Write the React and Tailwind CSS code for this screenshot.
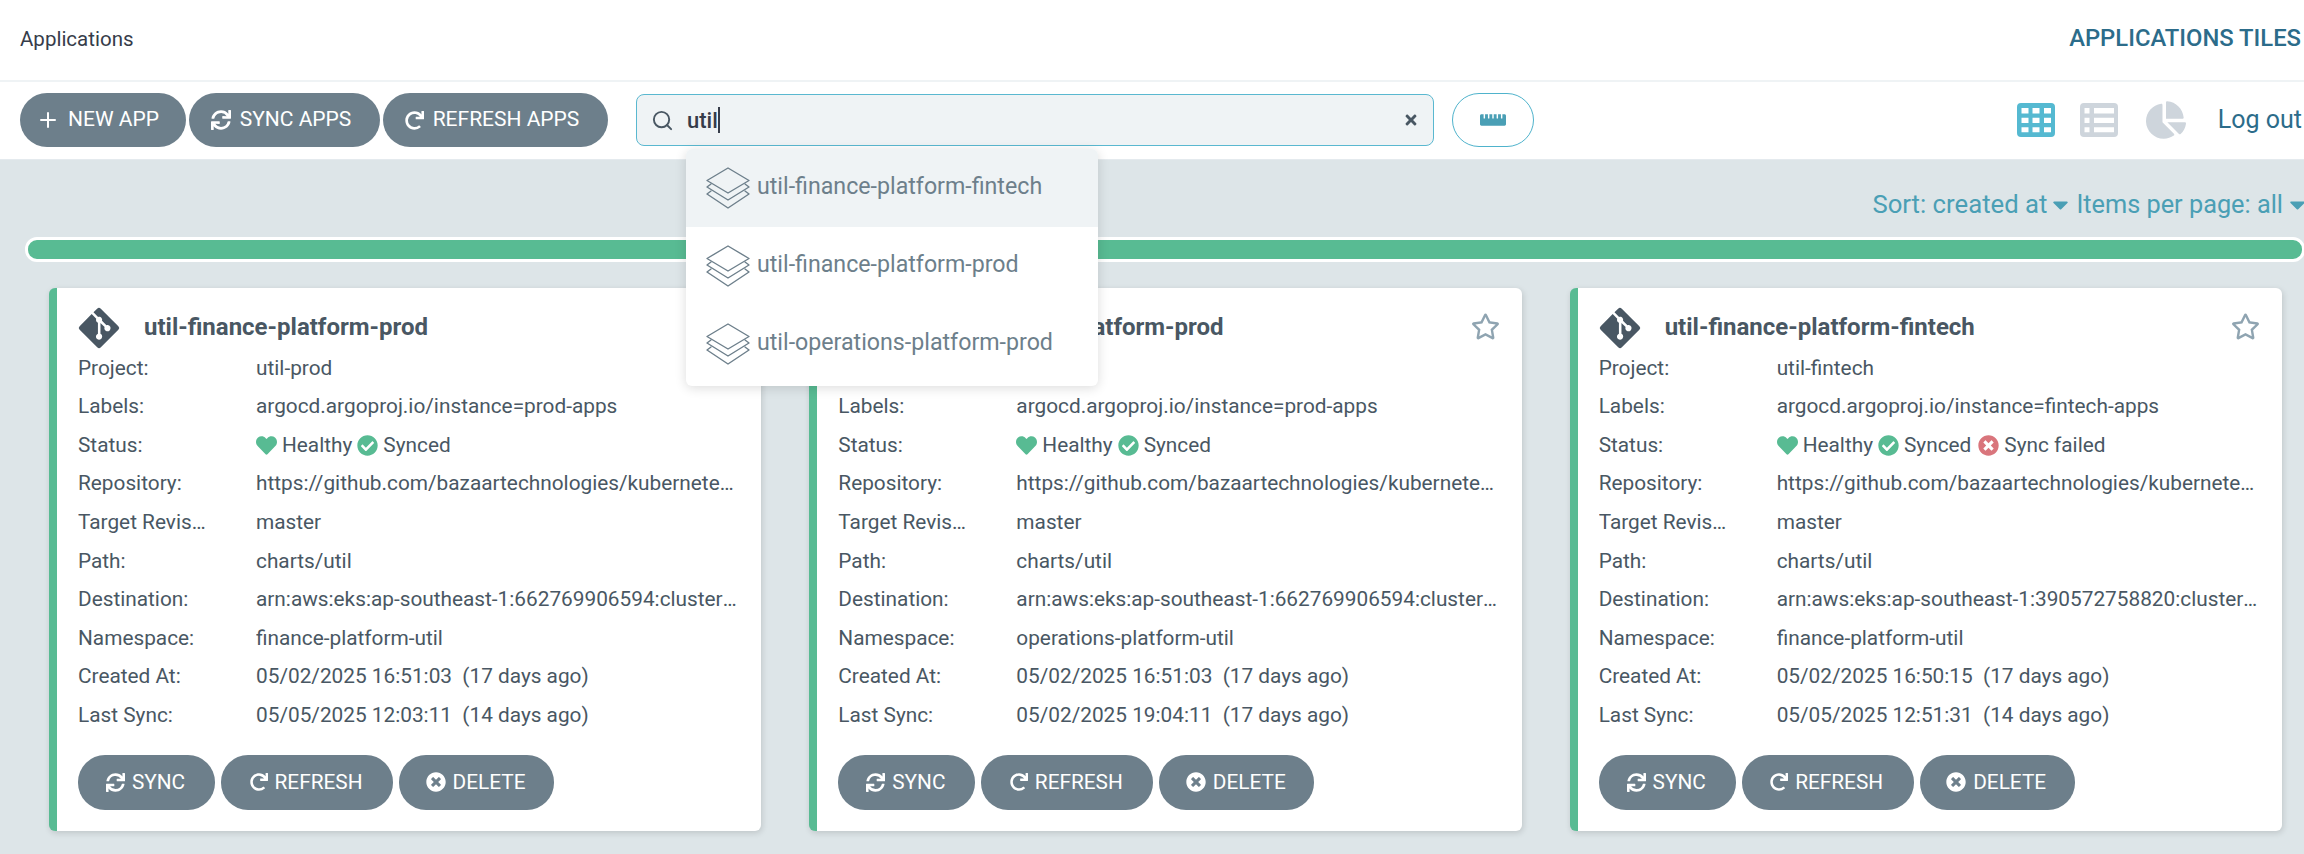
import React from 'react';
import { FaSync, FaRedo, FaTimesCircle, FaHeart, FaCheckCircle, FaGitAlt, FaRegStar, FaChartPie, FaCaretDown, FaRulerHorizontal, FaTimes } from 'react-icons/fa';
import { Search, Plus } from 'lucide-react';

const Layers = () => (
  <svg viewBox="0 0 44 42" className="w-[44px] h-[42px] shrink-0" fill="none" stroke="#6d7f8b" strokeWidth="1.4" strokeLinejoin="round" strokeLinecap="round">
    <path d="M22 1 L43 13.5 L22 26 L1 13.5 Z" />
    <path d="M5 17 L1 20 L22 33 L43 20 L39 17" />
    <path d="M5 24 L1 27 L22 41 L43 27 L39 24" />
  </svg>
);

const cells = [4.5, 15.5, 27];
const rows = [[5, 5.5], [14.7, 5.3], [24.3, 5]];

const ThIcon = ({ className }) => {
  let d = 'M4 0 H34 A4 4 0 0 1 38 4 V30 A4 4 0 0 1 34 34 H4 A4 4 0 0 1 0 30 V4 A4 4 0 0 1 4 0 Z';
  rows.forEach(([y, h]) => cells.forEach((x) => { d += ` M${x} ${y} h7 v${h} h-7 Z`; }));
  return <svg viewBox="0 0 38 34" className={className}><path d={d} fill="currentColor" fillRule="evenodd" /></svg>;
};

const ListIcon = ({ className }) => {
  let d = 'M4 0 H34 A4 4 0 0 1 38 4 V30 A4 4 0 0 1 34 34 H4 A4 4 0 0 1 0 30 V4 A4 4 0 0 1 4 0 Z';
  rows.forEach(([y, h]) => { d += ` M4.5 ${y} h5 v${h} h-5 Z M14 ${y} h20 v${h} h-20 Z`; });
  return <svg viewBox="0 0 38 34" className={className}><path d={d} fill="currentColor" fillRule="evenodd" /></svg>;
};

const Pill = ({ icon, label, className }) => (
  <button className={`rounded-[27px] bg-[#6d7f8b] text-white flex items-center justify-center uppercase ${className}`}>
    {icon}
    <span>{label}</span>
  </button>
);

const cards = [
  {
    title: 'util-finance-platform-prod', project: 'util-prod', instance: 'prod-apps', failed: false,
    dest: 'arn:aws:eks:ap-southeast-1:662769906594:cluster/bazaar-prod', ns: 'finance-platform-util',
    created: '05/02/2025 16:51:03', createdAgo: '17 days ago', sync: '05/05/2025 12:03:11', syncAgo: '14 days ago',
  },
  {
    title: 'util-operations-platform-prod', project: 'util-prod', instance: 'prod-apps', failed: false,
    dest: 'arn:aws:eks:ap-southeast-1:662769906594:cluster/bazaar-prod', ns: 'operations-platform-util',
    created: '05/02/2025 16:51:03', createdAgo: '17 days ago', sync: '05/02/2025 19:04:11', syncAgo: '17 days ago',
  },
  {
    title: 'util-finance-platform-fintech', project: 'util-fintech', instance: 'fintech-apps', failed: true,
    dest: 'arn:aws:eks:ap-southeast-1:390572758820:cluster/bazaar-fintech', ns: 'finance-platform-util',
    created: '05/02/2025 16:50:15', createdAgo: '17 days ago', sync: '05/05/2025 12:51:31', syncAgo: '14 days ago',
  },
];

const Row = ({ label, children }) => (
  <div className="flex h-[38.6px] items-center">
    <div className="w-[130px] mr-[48px] truncate shrink-0">{label}</div>
    <div className="w-[481px] truncate">{children}</div>
  </div>
);

const Card = ({ c }) => (
  <div className="bg-white rounded-[6px] border-l-[8px] border-[#58bb93] h-[543px] pl-[21px] pr-[22px] pt-[20px] shadow-[1px_2px_6px_rgba(0,0,0,0.14)] text-[#495763] text-[20.8px]">
    <div className="flex items-center h-[40px] mb-[1px]">
      <FaGitAlt className="text-[46px] text-[#495763] -ml-[2px] -mr-[1px] shrink-0" />
      <div className="ml-[23px] font-bold text-[24px] flex-1 -mt-[3px]">{c.title}</div>
      <FaRegStar className="text-[29px] text-[#8fa4b1] -mt-[3px]" />
    </div>
    <Row label="Project:">{c.project}</Row>
    <Row label="Labels:">argocd.argoproj.io/instance={c.instance}</Row>
    <Row label="Status:">
      <span className="flex items-center">
        <FaHeart className="text-[21px] text-[#58bb93] mr-[5px]" />Healthy
        <FaCheckCircle className="text-[21px] text-[#58bb93] mx-[5px]" />Synced
        {c.failed && <><FaTimesCircle className="text-[21px] text-[#d9757c] ml-[7px] mr-[5px]" />Sync failed</>}
      </span>
    </Row>
    <Row label="Repository:">https://github.com/bazaartechnologies/kubernetes-manifests.git</Row>
    <Row label="Target Revision:">master</Row>
    <Row label="Path:">charts/util</Row>
    <Row label="Destination:">{c.dest}</Row>
    <Row label="Namespace:">{c.ns}</Row>
    <Row label="Created At:">{c.created}&nbsp; ({c.createdAgo})</Row>
    <Row label="Last Sync:">{c.sync}&nbsp; ({c.syncAgo})</Row>
    <div className="flex gap-[6px] mt-[20px]">
      <Pill className="w-[137px] h-[55px] gap-[7px] pr-[2px] text-[20.8px]" icon={<FaSync className="text-[19px]" />} label="Sync" />
      <Pill className="w-[172px] h-[55px] gap-[7px] pr-[2px] text-[20.8px]" icon={<FaRedo className="text-[18px]" />} label="Refresh" />
      <Pill className="w-[155px] h-[55px] gap-[7px] pr-[2px] text-[20.8px]" icon={<FaTimesCircle className="text-[20px]" />} label="Delete" />
    </div>
  </div>
);

const items = ['util-finance-platform-fintech', 'util-finance-platform-prod', 'util-operations-platform-prod'];

export default function App() {
  return (
    <div className="w-[2304px] h-[854px] overflow-hidden bg-[#dde5e8] relative" style={{ fontFamily: 'Roboto, sans-serif' }}>
      <div className="h-[82px] bg-white border-b-[2px] border-[#eff3f5] flex items-center justify-between pl-[20px] pr-[3px]">
        <div className="text-[20.5px] text-[#363c4a] -mt-[2px]">Applications</div>
        <div className="text-[23.8px] font-medium text-[#2c6c8a] -mt-[2px]">APPLICATIONS TILES</div>
      </div>
      <div className="h-[78px] bg-white flex items-center pl-[20px] pr-[2px] pb-[1px] border-b-[1px] border-[#e4eaee]">
        <Pill className="w-[166px] h-[54px] gap-[8px] pr-[11px] text-[21px]" icon={<Plus size={24} strokeWidth={2} />} label="New App" />
        <Pill className="w-[191px] h-[54px] gap-[9px] pr-[7px] text-[21px] ml-[3px]" icon={<FaSync className="text-[20px]" />} label="Sync Apps" />
        <Pill className="w-[225px] h-[54px] gap-[9px] pr-[7px] text-[21px] ml-[3px]" icon={<FaRedo className="text-[19px]" />} label="Refresh Apps" />
        <div className="ml-[28px] w-[798px] h-[52px] rounded-[8px] border border-[#5ab8d0] bg-[#eff3f5] flex items-center pl-[14px] pr-[14px] text-[#363c4a]">
          <Search size={23} strokeWidth={2} className="text-[#495763]" />
          <span className="ml-[13px] text-[22px] font-medium">util</span>
          <span className="w-[2px] h-[26px] bg-[#363c4a]" />
          <FaTimes className="ml-auto text-[16px] text-[#495763]" />
        </div>
        <button className="ml-[18px] w-[82px] h-[54px] rounded-[27px] border-[1.5px] border-[#4fb3cc] bg-white flex items-center justify-center">
          <FaRulerHorizontal className="text-[26px] text-[#4a9fb5]" />
        </button>
        <div className="ml-auto flex items-center">
          <ThIcon className="w-[38px] h-[34px] text-[#55b9d1]" />
          <ListIcon className="ml-[25px] w-[38px] h-[34px] text-[#ced5dc]" />
          <FaChartPie className="ml-[28px] text-[40px] text-[#ced5dc]" />
          <span className="ml-[32px] text-[25px] text-[#2c6c8a]">Log out</span>
        </div>
      </div>
      <div className="h-[77px] flex items-center justify-end pt-[12px] text-[25.3px] text-[#4a9fb5]">
        <span className="text-[25.7px]">Sort: created at</span>
        <FaCaretDown className="text-[25px] ml-[1px] mr-[3px]" />
        <span>Items per page: all</span>
        <FaCaretDown className="text-[25px] ml-[2px] -mr-[6px]" />
      </div>
      <div className="ml-[25px] h-[25px] rounded-[12px] border-[3px] border-white bg-[#58bb93] -mr-[1px]" />
      <div className="grid grid-cols-3 gap-[48px] pl-[49px] pr-[22px] mt-[26px]">
        {cards.map((c) => <Card key={c.title} c={c} />)}
      </div>
      <div className="absolute left-[686px] top-[149px] w-[412px] pb-[3px] bg-white rounded-[6px] shadow-[0_2px_12px_rgba(0,0,0,0.14)] overflow-hidden">
        {items.map((t, i) => (
          <div key={t} className={`h-[78px] flex items-center pl-[20px] gap-[7px] text-[23.2px] text-[#6d7f8b] ${i === 0 ? 'bg-[#eff3f5]' : ''}`}>
            <Layers />
            <span className="-mt-[3px]">{t}</span>
          </div>
        ))}
      </div>
    </div>
  );
}
